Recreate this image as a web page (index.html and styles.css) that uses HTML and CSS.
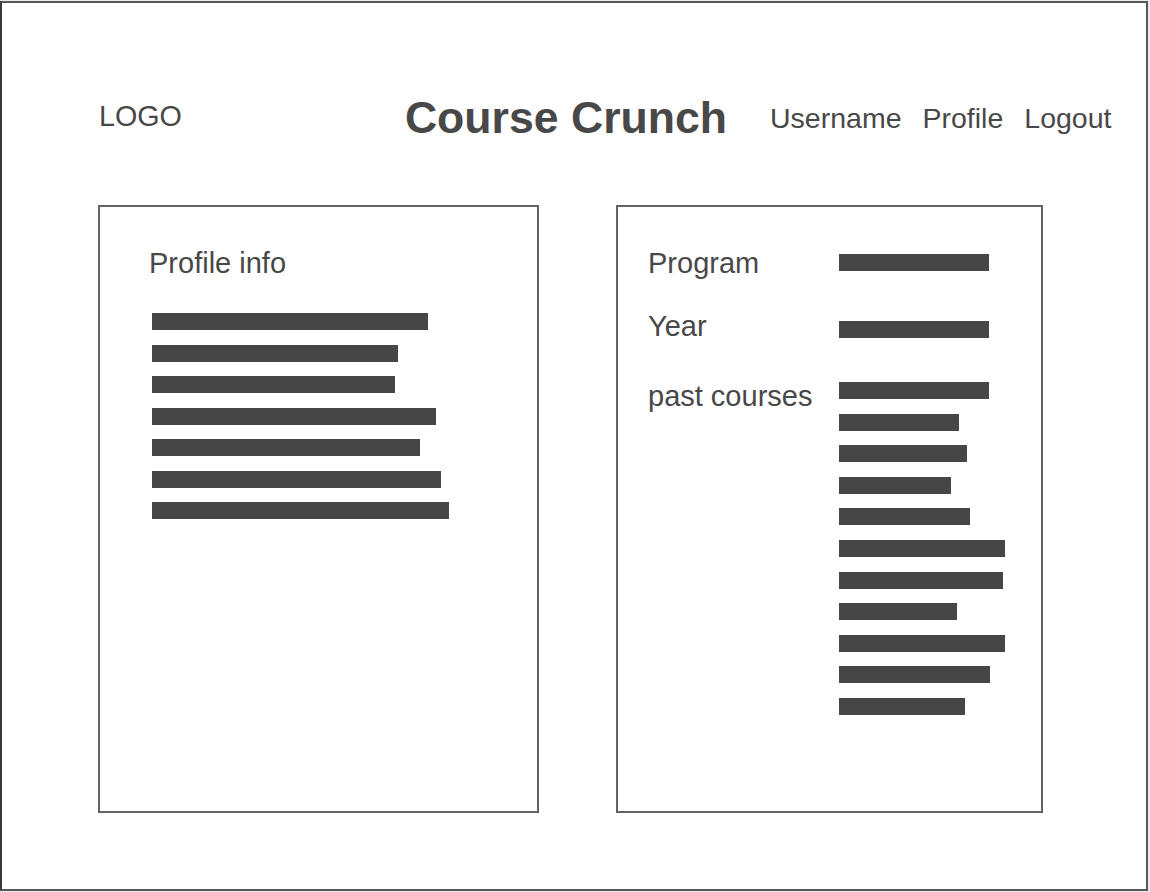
FILE: index.html
```html
<html>
    <head>
        <title>Course Crunch - Profile</title>
        <link rel="stylesheet" href="styles.css">
    </head>
    <body>
    <div class="frame">
        <!-- top bar -->
        <div class="header">
            <div class="logo">LOGO</div>
            <div class="title">Course Crunch</div>
            <div class="nav">
                <span>Username</span>
                <span>Profile</span>
                <span>Logout</span>
            </div>
        </div>

        <div class="cards">
            <!-- left card -->
            <div class="card card_left">
                <div class="label">Profile info</div>
                <div class="bar_list bar_list_left">
                    <div class="bar" style="width: 276px"></div>
                    <div class="bar" style="width: 246px"></div>
                    <div class="bar" style="width: 243px"></div>
                    <div class="bar" style="width: 284px"></div>
                    <div class="bar" style="width: 268px"></div>
                    <div class="bar" style="width: 289px"></div>
                    <div class="bar" style="width: 297px"></div>
                </div>
            </div>

            <!-- right card -->
            <div class="card card_right">
                <div class="row row_program">
                    <div class="label row_label">Program</div>
                    <div class="bar" style="width: 150px"></div>
                </div>
                <div class="row row_year">
                    <div class="label row_label">Year</div>
                    <div class="bar" style="width: 150px"></div>
                </div>
                <div class="row">
                    <div class="label row_label">past courses</div>
                    <div class="bar_list bar_list_right">
                        <div class="bar" style="width: 150px"></div>
                        <div class="bar" style="width: 120px"></div>
                        <div class="bar" style="width: 128px"></div>
                        <div class="bar" style="width: 112px"></div>
                        <div class="bar" style="width: 131px"></div>
                        <div class="bar" style="width: 166px"></div>
                        <div class="bar" style="width: 164px"></div>
                        <div class="bar" style="width: 118px"></div>
                        <div class="bar" style="width: 166px"></div>
                        <div class="bar" style="width: 151px"></div>
                        <div class="bar" style="width: 126px"></div>
                    </div>
                </div>
            </div>
        </div>
    </div>
    </body>
</html>
```

FILE: styles.css
```css
body{
    margin: 0;
    background: #ececec;
    font-family: "Liberation Sans", Arial, sans-serif;
    color: #484848;
}
.frame{
    box-sizing: border-box;
    width: 1148px;
    height: 890px;
    margin-top: 1px;
    background: #fff;
    border: 2px solid #575757;
    border-left-color: #353a3f;
}

/* header */
.header{
    box-sizing: border-box;
    height: 202px;
    padding-top: 93px;
    padding-left: 97px;
    display: flex;
    align-items: flex-start;
}
.logo{
    font-size: 28.7px;
    line-height: 28px;
    margin-top: 6px;
}
.title{
    font-size: 44.6px;
    line-height: 44px;
    font-weight: bold;
    margin-left: 223px;
}
.nav{
    display: flex;
    gap: 21px;
    font-size: 28.5px;
    line-height: 28px;
    margin-top: 8px;
    margin-left: 43px;
}

/* cards */
.cards{
    display: flex;
    gap: 77px;
    padding-left: 96px;
}
.card{
    box-sizing: border-box;
    height: 608px;
    border: 2px solid #636363;
    padding-top: 42px;
}
.card_left{
    width: 441px;
    padding-left: 49px;
}
.card_right{
    width: 427px;
    padding-left: 30px;
}
.label{
    font-size: 29px;
    line-height: 28px;
}
.bar{
    height: 17px;
    background: #464646;
}
.bar_list{
    display: flex;
    flex-direction: column;
    align-items: flex-start;
}
.bar_list_left{
    margin-top: 36px;
    margin-left: 3px;
    gap: 14.5px;
}
.bar_list_right{
    gap: 14.6px;
}
.row{
    display: flex;
    align-items: flex-start;
}
.row_label{
    width: 191px;
    flex-shrink: 0;
}
.row_program{
    margin-bottom: 35px;
}
.row_program .bar{
    margin-top: 5px;
}
.row_year{
    margin-bottom: 42px;
}
.row_year .bar{
    margin-top: 9px;
}
```
